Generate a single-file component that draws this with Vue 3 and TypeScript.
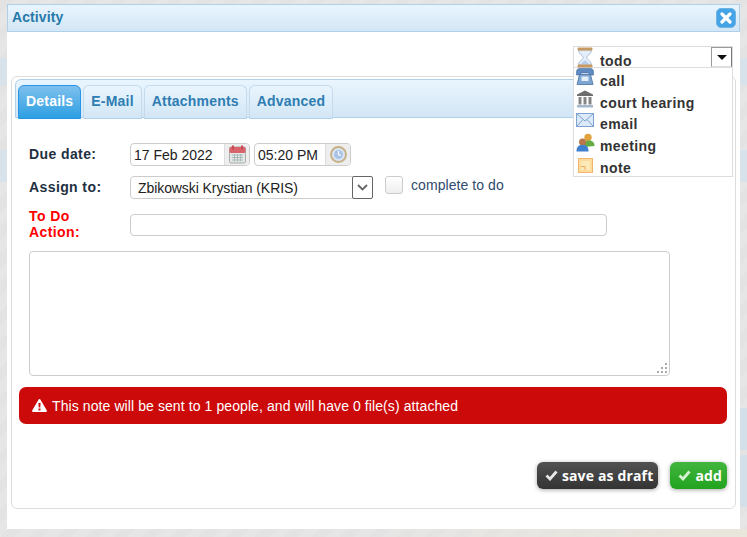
<script setup lang="ts">
const tabs: string[] = ['Details', 'E-Mail', 'Attachments', 'Advanced']
const kinds: string[] = ['call', 'court hearing', 'email', 'meeting', 'note']
</script>

<template>
  <div class="page">
    <div class="dialog">
      <header class="titlebar">
        <span class="title">Activity</span>
        <button class="close" type="button" aria-label="Close">
          <svg width="12" height="12" viewBox="0 0 12 12"><path d="M2 2l8 8M10 2l-8 8" stroke="#fff" stroke-width="3.2" stroke-linecap="round" /></svg>
        </button>
      </header>

      <div class="kind-menu">
        <div class="kind-head">
          <span class="kind-icon">
            <svg width="18" height="21" viewBox="0 0 18 21">
              <path d="M2.500 3h13c0 4-4.500 5.500-5 7.500.5 2 5 3.500 5 7.500h-13c0-4 4.500-5.500 5-7.500-.5-2-5-3.500-5-7.500z" fill="#e4eefa" stroke="#a9bdd6" />
              <path d="M5 17.500c0-1.500 3-3.500 4-4.500 1 1 4 3 4 4.500z" fill="#b5cdea" />
              <rect x="1.500" y="0.500" width="15" height="3" rx="1.200" fill="#c79a63" />
              <rect x="1.500" y="17.500" width="15" height="3" rx="1.200" fill="#c79a63" />
            </svg>
          </span>
          <span class="kind-text first">todo</span>
          <span class="kind-arrow"><i></i></span>
        </div>
        <ul class="kind-list">
          <li v-for="(k, i) in kinds" :key="k">
            <span class="kind-icon" :class="`ic${i}`">
              <svg v-if="i === 0" width="18" height="17" viewBox="0 0 18 17">
                <path d="M.5 4c0-2 1-3.500 3-3.500h11c2 0 3 1.500 3 3.500v3H13V5H5v2H.5z" fill="#5f8bc2" stroke="#3f6a9f" stroke-width=".6" />
                <path d="M3.500 6.500h11l2.500 10H1z" fill="#7ea6d3" stroke="#47709f" stroke-width=".8" />
                <rect x="5.500" y="8.500" width="7" height="4.500" fill="#e4eef8" />
              </svg>
              <svg v-else-if="i === 1" width="18" height="18" viewBox="0 0 18 18">
                <path d="M1 4.500L9 .5l8 4V6H1z" fill="#6d6d6d" />
                <path d="M2.500 7h3v7.500h-3zM7.500 7h3v7.500h-3zM12.500 7h3v7.500h-3z" fill="#858585" />
                <rect x="1" y="15" width="16" height="2.500" fill="#a3b6cc" />
              </svg>
              <svg v-else-if="i === 2" width="18" height="14" viewBox="0 0 18 14">
                <rect x=".5" y=".5" width="17" height="13" fill="#dce9f8" stroke="#7ea3d2" />
                <path d="M1 1l8 7 8-7M1 13l6-6.500M17 13l-6-6.500" fill="none" stroke="#7ea3d2" />
              </svg>
              <svg v-else-if="i === 3" width="19" height="19" viewBox="0 0 19 19">
                <circle cx="12" cy="4.500" r="3.700" fill="#e2a33e" />
                <path d="M8 14c0-5 2-6.500 5-6.500s5.500 1.500 5.500 5.500z" fill="#65ac46" />
                <circle cx="6.500" cy="9" r="3.500" fill="#b9764a" />
                <path d="M.5 18.500c0-5 2-6.500 6-6.500s6 1.500 6 6.500z" fill="#3f7fd0" />
              </svg>
              <svg v-else width="15" height="15" viewBox="0 0 15 15">
                <rect x=".5" y=".5" width="14" height="14" fill="#fcdc9c" stroke="#f2b56f" />
                <path d="M3 12V3h9v9H3z" fill="#fde9b8" />
                <path d="M3 8.500h4V12" fill="none" stroke="#eda85f" />
              </svg>
            </span>
            <span class="kind-text">{{ k }}</span>
          </li>
        </ul>
      </div>

      <section class="panel">
        <nav class="tabbar">
          <span v-for="(t, i) in tabs" :key="t" class="tab" :class="{ active: i === 0 }">{{ t }}</span>
        </nav>

        <div class="body">
          <div class="form">
            <div class="row">
              <label class="label">Due date:</label>
              <div class="field date">
                <span class="value">17 Feb 2022</span>
                <span class="addon">
                  <svg width="17" height="19" viewBox="0 0 17 19">
                    <rect x=".5" y="2" width="16" height="16" rx="1.500" fill="#e4e7e6" stroke="#a9adad" />
                    <rect x=".5" y="2" width="16" height="6" rx="1.500" fill="#d9636b" />
                    <rect x="3" y="0.500" width="2" height="4" fill="#c84a55" />
                    <rect x="12" y="0.500" width="2" height="4" fill="#c84a55" />
                    <path d="M3 10h11M3 12.500h11M3 15h11M5.500 9v7.500M8.500 9v7.500M11.500 9v7.500" stroke="#9fb4b4" stroke-width=".8" />
                  </svg>
                </span>
              </div>
              <div class="field time">
                <span class="value">05:20 PM</span>
                <span class="addon">
                  <svg width="17" height="17" viewBox="0 0 17 17">
                    <circle cx="8.500" cy="8.500" r="7.500" fill="#d9e6f4" stroke="#c9b189" stroke-width="2" />
                    <circle cx="8.500" cy="8.500" r="4.500" fill="#a9c4e6" />
                    <path d="M8.500 5v3.500l2.500 1" fill="none" stroke="#fff" stroke-width="1.200" />
                  </svg>
                </span>
              </div>
            </div>

            <div class="row">
              <label class="label">Assign to:</label>
              <div class="field select">
                <span class="value">Zbikowski Krystian (KRIS)</span>
                <span class="select-arrow">
                  <svg width="11" height="7" viewBox="0 0 11 7"><path d="M1 1l4.500 4.500L10 1" fill="none" stroke="#666" stroke-width="1.800" /></svg>
                </span>
              </div>
              <span class="check"></span>
              <span class="check-label">complete to do</span>
            </div>

            <div class="row todo">
              <label class="label required">To Do<br />Action:</label>
              <div class="field action"></div>
            </div>

            <div class="textarea">
              <svg class="grip" width="12" height="12" viewBox="0 0 12 12">
                <path d="M9 1h2v2H9zM5 5h2v2H5zM9 5h2v2H9zM1 9h2v2H1zM5 9h2v2H5zM9 9h2v2H9z" fill="#aaa" />
              </svg>
            </div>
          </div>

          <div class="alert">
            <svg width="15" height="13" viewBox="0 0 15 13">
              <path fill-rule="evenodd" d="M7.500 0c.5 0 .8.300 1 .7l6.200 10.600c.4.700 0 1.700-1 1.700H1.300c-1 0-1.400-1-1-1.700L6.500.7c.2-.4.500-.7 1-.7zM6.400 4l.3 4.500h1.600L8.600 4zM6.500 9.500v2h2v-2z" fill="#fff" />
            </svg>
            <span>This note will be sent to 1 people, and will have 0 file(s) attached</span>
          </div>

          <div class="actions">
            <button class="btn dark" type="button">
              <svg width="13" height="11" viewBox="0 0 13 11"><path d="M1.500 5.500L5 9l6.500-7.500" fill="none" stroke="#e8e8e8" stroke-width="2.800" /></svg>
              save as draft
            </button>
            <button class="btn green" type="button">
              <svg width="13" height="11" viewBox="0 0 13 11"><path d="M1.500 5.500L5 9l6.500-7.500" fill="none" stroke="#d6f0d2" stroke-width="2.800" /></svg>
              add
            </button>
          </div>
        </div>
      </section>
    </div>
  </div>
</template>

<style scoped>
.page {
  box-sizing: border-box;
  height: 537px;
  padding: 4px 7px 8px;
  overflow: hidden;
  font-family: "Liberation Sans", Arial, sans-serif;
  font-size: 14px;
  background:
    linear-gradient(#d8e2ea, #d8e2ea) 0 58px / 100% 27px no-repeat,
    linear-gradient(#d8e2ea, #d8e2ea) 0 150px / 100% 32px no-repeat,
    linear-gradient(#d3dfe9, #d3dfe9) 740px 408px / 7px 42px no-repeat,
    linear-gradient(#d3dfe9, #d3dfe9) 740px 455px / 7px 52px no-repeat,
    linear-gradient(90deg, transparent 50%, #e9e6dc) 0 529px / 100% 8px no-repeat,
    repeating-linear-gradient(135deg, #e3e3e3 0 10px, #e6e6e6 10px 20px);
}

.dialog {
  position: relative;
  box-sizing: border-box;
  height: 525px;
  background: #fff;
}

.titlebar {
  box-sizing: border-box;
  height: 28px;
  display: flex;
  align-items: center;
  justify-content: space-between;
  padding: 0 3px 0 4px;
  border: 1px solid #aed0ea;
  background: linear-gradient(#e9f5fe, #d3e6f5);
}

.title {
  margin-bottom: 2px;
  color: #2779aa;
  font-weight: 700;
  font-size: 14px;
  letter-spacing: 0.1px;
}

.close {
  width: 20px;
  height: 20px;
  padding: 0;
  display: flex;
  align-items: center;
  justify-content: center;
  border: 1px solid #6db3e6;
  border-radius: 5px;
  background: #45a4e5;
}

.kind-menu {
  position: absolute;
  z-index: 2;
  left: 566px;
  top: 42px;
  width: 160px;
  font-weight: 700;
  letter-spacing: 0.4px;
  color: #333;
}

.kind-head {
  box-sizing: border-box;
  height: 21px;
  display: flex;
  align-items: flex-end;
  border: 1px solid #ddd;
  border-bottom: 0;
  background: #fff;
}

.kind-list {
  box-sizing: border-box;
  height: 110px;
  margin: 0;
  padding: 0;
  list-style: none;
  background: #fff;
  border: 1px solid #ddd;
}

.kind-list li {
  height: 21.7px;
  display: flex;
  align-items: flex-start;
}

.kind-icon {
  flex: 0 0 26px;
  height: 20px;
  padding-left: 2px;
  box-sizing: border-box;
  display: flex;
  align-items: flex-start;
}

.ic2 {
  padding-top: 2px;
}

.ic3 {
  padding-left: 2px;
}

.ic4 {
  padding-top: 3px;
  padding-left: 4px;
}

.kind-head .kind-icon {
  height: 22px;
  align-self: flex-start;
  overflow: visible;
}

.kind-text {
  line-height: 20px;
  margin-top: 3px;
  white-space: nowrap;
}

.kind-text.first {
  margin: 0 0 -3px;
  line-height: 18px;
  flex: 1;
}

.kind-arrow {
  box-sizing: border-box;
  width: 21px;
  height: 20px;
  align-self: flex-start;
  display: flex;
  align-items: center;
  justify-content: center;
  border: 1px solid #767676;
  border-color: #999 #777 #ddd #999;
  background: #fff;
}

.kind-arrow i {
  width: 0;
  height: 0;
  border: 5px solid transparent;
  border-top: 5px solid #111;
  border-bottom: 0;
}

.panel {
  box-sizing: border-box;
  height: 433px;
  margin: 44px 4px 0;
  padding: 2px 3px 0;
  border: 1px solid #ddd;
  border-radius: 6px;
  background: #fff;
}

.tabbar {
  box-sizing: border-box;
  height: 39px;
  display: flex;
  gap: 2px;
  padding: 5px 0 0 2px;
  border: 1px solid #aed0ea;
  border-radius: 6px 6px 0 0;
  background: linear-gradient(#e9f5fe, #d3e6f5);
}

.tab {
  box-sizing: border-box;
  height: 34px;
  padding: 0 7px;
  line-height: 31px;
  border: 1px solid #c5dbec;
  border-bottom: 1px solid #aed0ea;
  border-radius: 6px 6px 0 0;
  background: linear-gradient(#e9f5fe, #d3e6f5);
  color: #2e7db2;
  font-weight: 700;
  letter-spacing: 0.2px;
}

.tab.active {
  color: #fff;
  border-color: #2694e8;
  background: linear-gradient(#7ec0ee, #2d9fe2);
}

.body {
  padding: 25px 5px 0 4px;
}

.form {
  display: flex;
  flex-direction: column;
  gap: 10px;
  padding-left: 10px;
}

.row {
  display: flex;
  align-items: flex-start;
  height: 23px;
}

.todo {
  height: 32px;
  align-items: center;
}

.label {
  flex: 0 0 101px;
  color: #22303f;
  font-weight: 700;
  letter-spacing: 0.4px;
  line-height: 23px;
}

.required {
  padding-bottom: 2px;
  color: #f00;
  line-height: 16px;
}

.field {
  box-sizing: border-box;
  display: flex;
  align-items: center;
  height: 23px;
  background: #fff;
  border: 1px solid #ccc;
  border-radius: 4px;
  color: #222;
  overflow: hidden;
}

.value {
  flex: 1;
  padding-left: 3px;
  white-space: nowrap;
}

.date {
  width: 120px;
}

.time {
  width: 97px;
  margin-left: 4px;
}

.addon {
  flex: 0 0 24px;
  height: 100%;
  display: flex;
  align-items: center;
  justify-content: center;
  background: #eee;
  border-left: 1px solid #ddd;
}

.select {
  width: 243px;
  overflow: visible;
}

.select .value {
  padding-left: 7px;
  letter-spacing: -0.08px;
}

.select-arrow {
  box-sizing: border-box;
  flex: 0 0 21px;
  height: 23px;
  margin: -1px -1px -1px 0;
  display: flex;
  align-items: center;
  justify-content: center;
  border: 1px solid #666;
  border-radius: 2px;
  background: #fff;
}

.check {
  box-sizing: border-box;
  width: 18px;
  height: 18px;
  margin-left: 12px;
  border: 1px solid #ccc;
  border-radius: 3px;
  background: linear-gradient(#fff, #eee);
}

.check-label {
  margin-left: 8px;
  line-height: 18px;
  color: #2e4c6d;
  letter-spacing: 0.07px;
}

.action {
  width: 477px;
  height: 22px;
}

.textarea {
  position: relative;
  box-sizing: border-box;
  width: 641px;
  height: 125px;
  border: 1px solid #ccc;
  border-radius: 4px;
  background: #fff;
}

.grip {
  position: absolute;
  right: 1px;
  bottom: 1px;
}

.alert {
  box-sizing: border-box;
  height: 37px;
  margin-top: 11px;
  display: flex;
  align-items: center;
  gap: 5px;
  padding-left: 13px;
  border-radius: 7px;
  background: #cc0a0a;
  color: #fff;
  letter-spacing: 0.09px;
}

.actions {
  display: flex;
  justify-content: flex-end;
  gap: 12px;
  margin-top: 38px;
}

.btn {
  box-sizing: border-box;
  height: 27px;
  display: flex;
  align-items: center;
  gap: 4px;
  padding: 0 5px 0 8px;
  border: 0;
  border-radius: 6px;
  color: #fff;
  font-family: "Open Sans", "DejaVu Sans", sans-serif;
  font-size: 14px;
  font-weight: 700;
  letter-spacing: 0.15px;
  box-shadow: 0 1px 4px rgba(0, 0, 0, 0.35);
}

.dark {
  background: linear-gradient(#525252, #333);
}

.green {
  background: linear-gradient(#42b53e, #22a31f);
}
</style>
